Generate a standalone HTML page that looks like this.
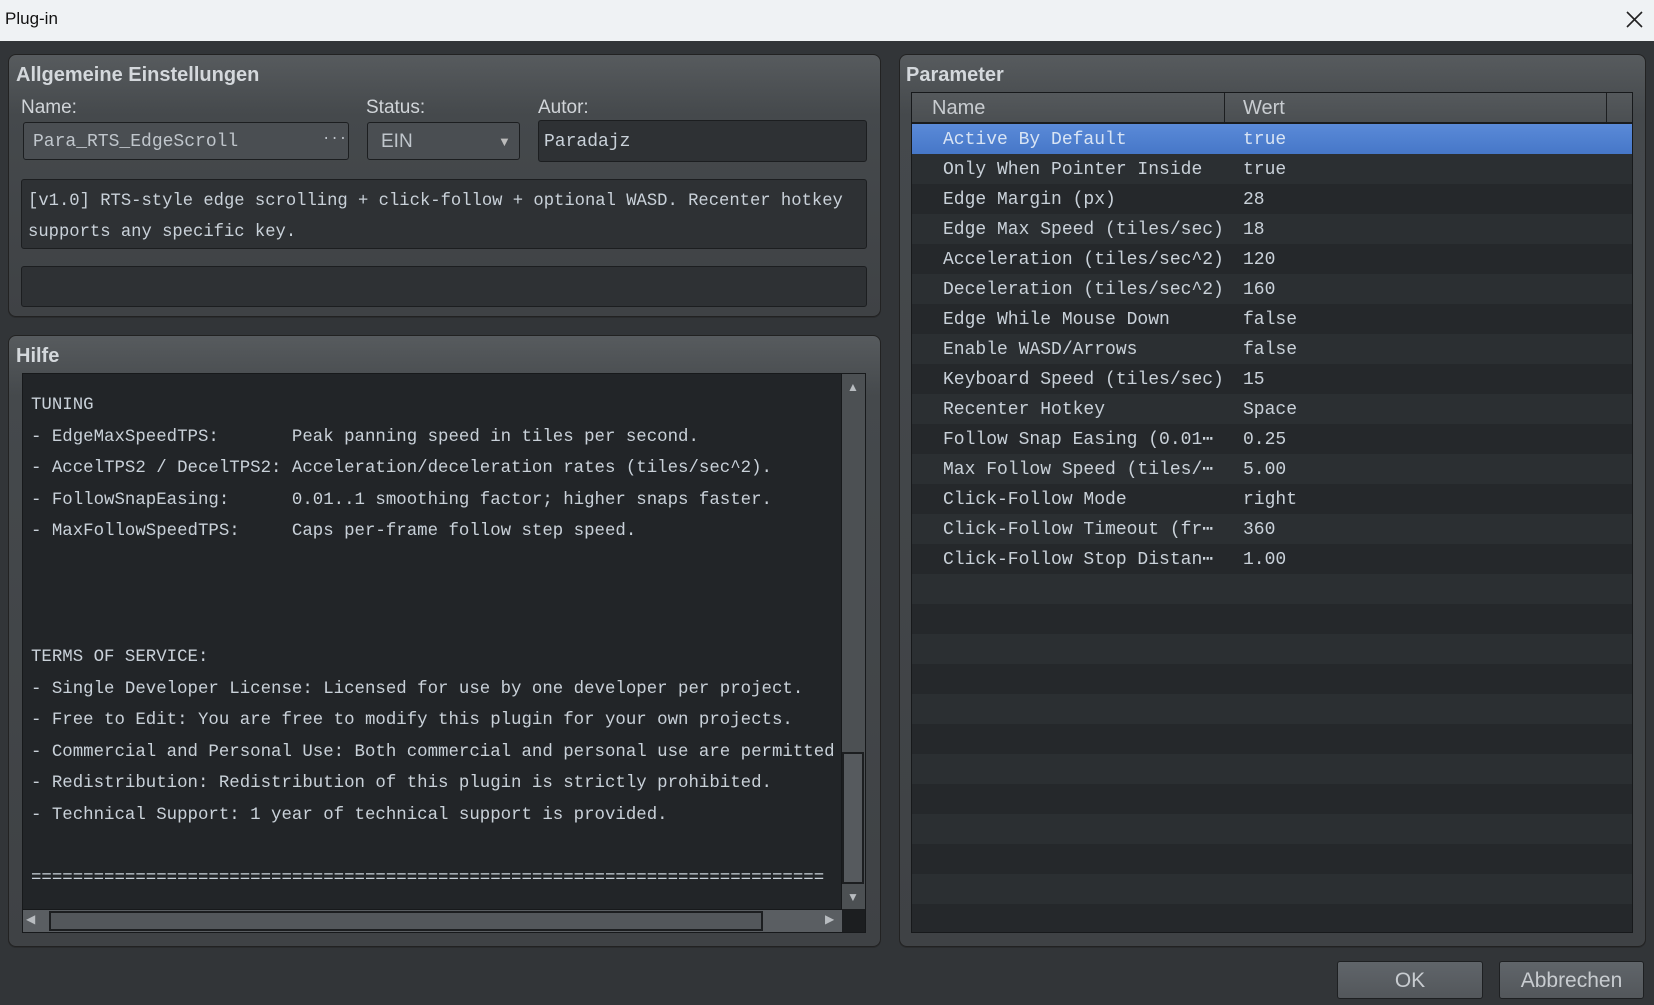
<!DOCTYPE html>
<html><head><meta charset="utf-8"><style>
*{box-sizing:border-box;margin:0;padding:0}
body{width:1654px;height:1005px;background:#323538;position:relative;overflow:hidden;font-family:"Liberation Sans","DejaVu Sans",sans-serif;color:#c9ced3}
.abs{position:absolute}
.title{left:0;top:0;width:1654px;height:41px;background:#eff2f4;color:#111;font-size:17px}
.grp{border:1px solid #222;border-radius:8px;background:linear-gradient(#575b5e,#45494c 60px,#3f4245);box-shadow:0 1px 0 #2a2c2e}
.gt{font-weight:bold;font-size:20px;color:#d4d8dc}
.lbl{font-size:19px;color:#d0d4d8}
.field{border:1px solid #1c1e20;border-radius:3px}
.mono{font-family:"Liberation Mono","DejaVu Sans Mono",monospace;color:#c9d1d9}
.row{position:absolute;left:0;width:720px;height:30px;font-size:18px;line-height:32px}
.row span{position:absolute}
.btn{border:1px solid #1e2022;border-radius:3px;background:linear-gradient(#60656a,#53575b);color:#c8ccd0;font-size:21px;text-align:center;line-height:37px}
</style></head><body>
<div class="abs title"><span class="abs" style="left:5px;top:9px">Plug-in</span>
<svg class="abs" style="left:1626px;top:11px" width="17" height="17"><path d="M1 1L16 16M16 1L1 16" stroke="#222" stroke-width="1.6"/></svg></div>

<!-- Left top group -->
<div class="abs grp" style="left:8px;top:54px;width:873px;height:263px"></div>
<div class="abs gt" style="left:16px;top:64px">Allgemeine Einstellungen</div>
<div class="abs lbl" style="left:21px;top:97px">Name:</div>
<div class="abs lbl" style="left:366px;top:97px">Status:</div>
<div class="abs lbl" style="left:538px;top:97px">Autor:</div>
<div class="abs field mono" style="left:23px;top:122px;width:326px;height:38px;background:#4a4e52;font-size:18px;line-height:38px;padding-left:9px;color:#c0c6cc">Para_RTS_EdgeScroll<span class="abs" style="left:298px;top:-3px;font-size:14px">···</span></div>
<div class="abs field" style="left:367px;top:122px;width:153px;height:38px;background:#4a4e52;font-size:19px;line-height:38px;padding-left:13px;color:#c0c6cc">EIN<span class="abs" style="left:130px;top:0;font-size:13px;color:#bbb">▼</span></div>
<div class="abs field mono" style="left:538px;top:120px;width:329px;height:42px;background:#2e3134;font-size:18px;line-height:42px;padding-left:5px">Paradajz</div>
<div class="abs field mono" style="left:21px;top:179px;width:846px;height:70px;background:#2e3134;font-size:17.2px;line-height:31px;padding:6px 0 0 6px;white-space:pre">[v1.0] RTS-style edge scrolling + click-follow + optional WASD. Recenter hotkey
supports any specific key.</div>
<div class="abs field" style="left:21px;top:266px;width:846px;height:41px;background:#2e3134"></div>

<!-- Hilfe group -->
<div class="abs grp" style="left:8px;top:335px;width:873px;height:612px"></div>
<div class="abs gt" style="left:16px;top:345px">Hilfe</div>
<div class="abs" style="left:22px;top:373px;width:844px;height:560px;background:#222528;border:1px solid #17191b"></div>
<div class="abs mono" style="left:31px;top:390px;width:803px;height:516px;overflow:hidden;font-size:17.4px;line-height:31.5px;white-space:pre">TUNING
- EdgeMaxSpeedTPS:       Peak panning speed in tiles per second.
- AccelTPS2 / DecelTPS2: Acceleration/deceleration rates (tiles/sec^2).
- FollowSnapEasing:      0.01..1 smoothing factor; higher snaps faster.
- MaxFollowSpeedTPS:     Caps per-frame follow step speed.



TERMS OF SERVICE:
- Single Developer License: Licensed for use by one developer per project.
- Free to Edit: You are free to modify this plugin for your own projects.
- Commercial and Personal Use: Both commercial and personal use are permitted.
- Redistribution: Redistribution of this plugin is strictly prohibited.
- Technical Support: 1 year of technical support is provided.

============================================================================</div>
<!-- vertical scrollbar -->
<div class="abs" style="left:841px;top:374px;width:24px;height:535px;background:#4c5053;border-left:1px solid #17191b"></div>
<div class="abs" style="left:847px;top:380px;font-size:12px;color:#b8bcc0">▲</div>
<div class="abs" style="left:842px;top:752px;width:22px;height:132px;background:#565a5e;border:2px solid #1c1e20"></div>
<div class="abs" style="left:847px;top:890px;font-size:12px;color:#b8bcc0">▼</div>
<!-- horizontal scrollbar -->
<div class="abs" style="left:23px;top:909px;width:819px;height:23px;background:#5a5e62;border-top:1px solid #17191b"></div>
<div class="abs" style="left:26px;top:912px;font-size:12px;color:#b8bcc0">◀</div>
<div class="abs" style="left:49px;top:911px;width:714px;height:20px;background:#53575b;border:2px solid #1c1e20"></div>
<div class="abs" style="left:825px;top:912px;font-size:12px;color:#b8bcc0">▶</div>
<div class="abs" style="left:842px;top:909px;width:23px;height:23px;background:#1c1e20"></div>

<!-- Parameter group -->
<div class="abs grp" style="left:899px;top:54px;width:747px;height:893px"></div>
<div class="abs gt" style="left:906px;top:64px">Parameter</div>
<div class="abs" style="left:911px;top:92px;width:722px;height:841px;background:#25282b;border:1px solid #17191b;overflow:hidden">
<div class="abs" style="left:0;top:0;width:720px;height:31px;background:linear-gradient(#55595c,#4b4f52);border-bottom:2px solid #1a1c1e;font-size:20px;line-height:31px;color:#c8ccd0">
<span class="abs" style="left:20px">Name</span><span class="abs" style="left:312px;top:0;height:29px;border-left:1px solid #1c1e20"></span><span class="abs" style="left:331px">Wert</span><span class="abs" style="left:694px;top:0;height:29px;border-left:1px solid #1c1e20"></span></div>
<div id="rows" class="abs mono" style="left:0;top:31px;width:720px;height:810px"></div>
</div>

<div class="abs btn" style="left:1337px;top:961px;width:146px;height:38px">OK</div>
<div class="abs btn" style="left:1499px;top:961px;width:145px;height:38px">Abbrechen</div>
<script>
var d=[["Active By Default","true"],["Only When Pointer Inside","true"],["Edge Margin (px)","28"],["Edge Max Speed (tiles/sec)","18"],["Acceleration (tiles/sec^2)","120"],["Deceleration (tiles/sec^2)","160"],["Edge While Mouse Down","false"],["Enable WASD/Arrows","false"],["Keyboard Speed (tiles/sec)","15"],["Recenter Hotkey","Space"],["Follow Snap Easing (0.01\u22ef","0.25"],["Max Follow Speed (tiles/\u22ef","5.00"],["Click-Follow Mode","right"],["Click-Follow Timeout (fr\u22ef","360"],["Click-Follow Stop Distan\u22ef","1.00"]];
var h="";for(var i=0;i<28;i++){var bg=i==0?"linear-gradient(#5a8ad8,#4677c8)":(i%2?"#2b2f32":"#25282b");var r=d[i]||["",""];
h+='<div class="row" style="top:'+(i*30)+'px;background:'+bg+(i==0?';color:#d8e4f4':'')+'"><span style="left:31px">'+r[0]+'</span><span style="left:331px">'+r[1]+'</span></div>';}
document.getElementById("rows").innerHTML=h;
</script>
</body></html>
